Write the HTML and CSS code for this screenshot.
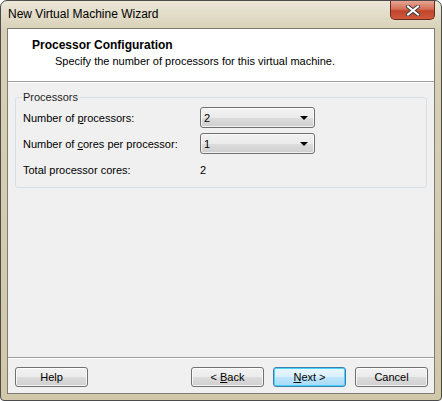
FILE: index.html
```html
<!DOCTYPE html>
<html lang="en">
<head>
    <meta charset="UTF-8">
    <title>New Virtual Machine Wizard</title>
    <link rel="stylesheet" href="styles.css">
</head>
<body>
    <div class="window">
        <div class="titlebar">
            <span class="title">New Virtual Machine Wizard</span>
            <button class="close-btn" aria-label="Close">
                <svg width="14" height="11" viewBox="0 0 14 11">
                    <path d="M2 1.5 L12 9.5 M12 1.5 L2 9.5" stroke="#3a3a3a" stroke-width="4" stroke-linecap="square"/>
                    <path d="M2 1.5 L12 9.5 M12 1.5 L2 9.5" stroke="#ffffff" stroke-width="2" stroke-linecap="square"/>
                </svg>
            </button>
        </div>
        <div class="client">
            <div class="wizard-header">
                <div class="header-title">Processor Configuration</div>
                <div class="header-sub">Specify the number of processors for this virtual machine.</div>
            </div>
            <div class="wizard-body">
                <fieldset class="group">
                    <legend>Processors</legend>
                    <div class="form-grid">
                        <label>Number of <u>p</u>rocessors:</label>
                        <div class="combo"><span>2</span><i class="arrow"></i></div>

                        <label>Number of <u>c</u>ores per processor:</label>
                        <div class="combo"><span>1</span><i class="arrow"></i></div>

                        <label class="total-label">Total processor cores:</label>
                        <div class="total-value">2</div>
                    </div>
                </fieldset>
            </div>
            <div class="wizard-footer">
                <button class="btn">Help</button>
                <div class="nav-buttons">
                    <button class="btn">&lt; <u>B</u>ack</button>
                    <button class="btn btn-default"><u>N</u>ext &gt;</button>
                    <button class="btn">Cancel</button>
                </div>
            </div>
        </div>
    </div>
</body>
</html>
```

FILE: styles.css
```css
* {
    box-sizing: border-box;
}
body {
    margin: 0;
    font-family: "Liberation Sans", Arial, sans-serif;
    font-size: 11px;
    color: #000;
    background: #fff;
}
.window {
    width: 442px;
    height: 401px;
    display: flex;
    flex-direction: column;
    border: 1px solid #4b4b4b;
    border-radius: 7px 7px 4px 4px;
    background: linear-gradient(#ebe6d8, #d8d0b6 30px, #d1c8aa);
    overflow: hidden;
}
.titlebar {
    height: 27px;
    display: flex;
    justify-content: space-between;
    align-items: flex-start;
    padding-left: 7px;
}
.title {
    font-size: 12px;
    margin-top: 6px;
    color: #000;
}
.close-btn {
    width: 45px;
    height: 19px;
    margin-right: 6px;
    border: 1px solid #6b2a1e;
    border-top: none;
    border-radius: 0 0 5px 5px;
    background: linear-gradient(#e7a493, #d46f57 45%, #c1442a 55%, #cf5a3c);
    display: flex;
    align-items: center;
    justify-content: center;
    padding: 0;
}
.client {
    flex: 1;
    margin: 0 6px 6px 6px;
    border: 1px solid #7e7b72;
    background: #f0f0f0;
    display: flex;
    flex-direction: column;
}
.wizard-header {
    height: 53px;
    background: #fff;
    border-bottom: 1px solid #a0a0a0;
    box-shadow: 0 1px 0 #fff;
    padding: 9px 0 0 24px;
}
.header-title {
    font-weight: bold;
    font-size: 12px;
    line-height: 14px;
}
.header-sub {
    margin-top: 2px;
    padding-left: 23px;
    line-height: 14px;
}
.wizard-body {
    flex: 1;
    padding: 9px 7px 0 7px;
}
.group {
    margin: 0;
    height: 97px;
    border: 1px solid #d5dfe5;
    border-radius: 3px;
    padding: 0 7px;
}
.group legend {
    padding: 0 1px;
    margin-left: -1px;
    line-height: 13px;
    color: #1e1e1e;
}
.form-grid {
    display: grid;
    grid-template-columns: 177px 115px;
    grid-auto-rows: 21px;
    row-gap: 5px;
    align-items: center;
    margin-top: 3px;
}
.form-grid u {
    text-decoration-thickness: 1px;
}
.combo {
    height: 21px;
    border: 1px solid #707070;
    border-radius: 3px;
    background: linear-gradient(#f2f2f2, #ebebeb 50%, #dddddd 50%, #cfcfcf);
    display: flex;
    align-items: center;
    justify-content: space-between;
    padding: 0 6px 0 3px;
    box-shadow: inset 0 0 0 1px rgba(255, 255, 255, 0.7);
}
.arrow {
    width: 0;
    height: 0;
    border-left: 4px solid transparent;
    border-right: 4px solid transparent;
    border-top: 4px solid #000;
}
.total-value {
    padding-left: 0;
}
.wizard-footer {
    height: 36px;
    border-top: 1px solid #a0a0a0;
    box-shadow: inset 0 1px 0 #fff;
    display: flex;
    justify-content: space-between;
    align-items: flex-start;
    padding: 9px 6px 0 7px;
}
.nav-buttons {
    display: flex;
    gap: 9px;
}
.btn {
    width: 73px;
    height: 20px;
    font-family: "Liberation Sans", Arial, sans-serif;
    font-size: 11px;
    color: #000;
    border: 1px solid #707070;
    border-radius: 3px;
    background: linear-gradient(#f2f2f2, #ebebeb 50%, #dddddd 50%, #cfcfcf);
    box-shadow: inset 0 0 0 1px rgba(255, 255, 255, 0.8);
    padding: 0;
}
.btn-default {
    border-color: #3c7fb1;
    background: linear-gradient(#eaf6fd, #d9f0fc 50%, #bee6fd 50%, #a7d9f5);
    box-shadow: inset 0 0 0 1px #48d2f8;
}
```
